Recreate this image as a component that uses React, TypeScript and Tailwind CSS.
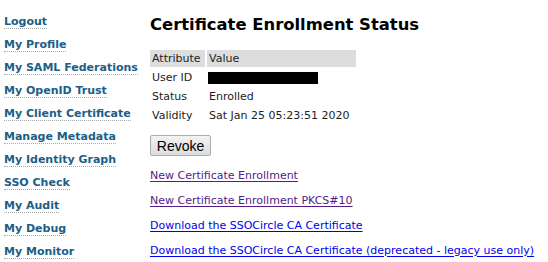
import React from 'react';

const menu = [
    'Logout',
    'My Profile',
    'My SAML Federations',
    'My OpenID Trust',
    'My Client Certificate',
    'Manage Metadata',
    'My Identity Graph',
    'SSO Check',
    'My Audit',
    'My Debug',
    'My Monitor',
];

const rows = [
    { attr: 'User ID', value: null },
    { attr: 'Status', value: 'Enrolled' },
    { attr: 'Validity', value: 'Sat Jan 25 05:23:51 2020' },
];

const links = [
    { label: 'New Certificate Enrollment', visited: true },
    { label: 'New Certificate Enrollment PKCS#10', visited: true },
    { label: 'Download the SSOCircle CA Certificate', visited: false },
    { label: 'Download the SSOCircle CA Certificate (deprecated - legacy use only)', visited: false },
];

const App: React.FC = () => {
    return (
        <div className="flex w-[548px] h-[262px] overflow-hidden bg-white font-['DejaVu_Sans',sans-serif] text-[11px] text-[#222]">
            {/* Side menu */}
            <ul className="w-[146px] shrink-0 pl-[4px] pt-[14px] flex flex-col">
                {menu.map((item) => (
                    <li key={item} className="h-[23px] shrink-0 whitespace-nowrap">
                        <a className="font-bold text-[11px] leading-[13px] text-[#1b5e86] border-b border-dotted border-[#aaa]">
                            {item}
                        </a>
                    </li>
                ))}
            </ul>

            {/* Content */}
            <div className="flex-1 pl-[4px] pt-[15px]">
                <h2 className="font-bold text-[16.4px] leading-[20px] text-black whitespace-nowrap">Certificate Enrollment Status</h2>

                <table className="mt-[13px] -ml-[2px] border-separate border-spacing-[2px]">
                    <thead>
                        <tr className="bg-[#dddddd]">
                            <th className="font-normal text-left px-[2px] h-[17px] leading-[15px] w-[55px]">Attribute</th>
                            <th className="font-normal text-left px-[2px] h-[17px] leading-[15px] w-[149px]">Value</th>
                        </tr>
                    </thead>
                    <tbody>
                        {rows.map((row) => (
                            <tr key={row.attr}>
                                <td className="px-[2px] h-[17px] leading-[15px]">{row.attr}</td>
                                <td className="px-[2px] h-[17px] leading-[15px]">
                                    {row.value ?? <div className="w-[110px] h-[12px] -ml-[1px] bg-black" />}
                                </td>
                            </tr>
                        ))}
                    </tbody>
                </table>

                <button className="mt-[9px] w-[61px] h-[21px] border border-[#adadad] rounded-[2px] bg-gradient-to-b from-[#f2f2f2] to-[#dddddd] font-['Liberation_Sans',sans-serif] text-[14px] text-black">
                    Revoke
                </button>

                <div className="mt-[12px] flex flex-col">
                    {links.map((link) => (
                        <a
                            key={link.label}
                            className={`h-[25px] leading-[14px] underline underline-offset-2 whitespace-nowrap ${link.visited ? 'text-[#551a8b]' : 'text-[#0000ee]'}`}
                        >
                            {link.label}
                        </a>
                    ))}
                </div>
            </div>
        </div>
    );
};

export default App;
